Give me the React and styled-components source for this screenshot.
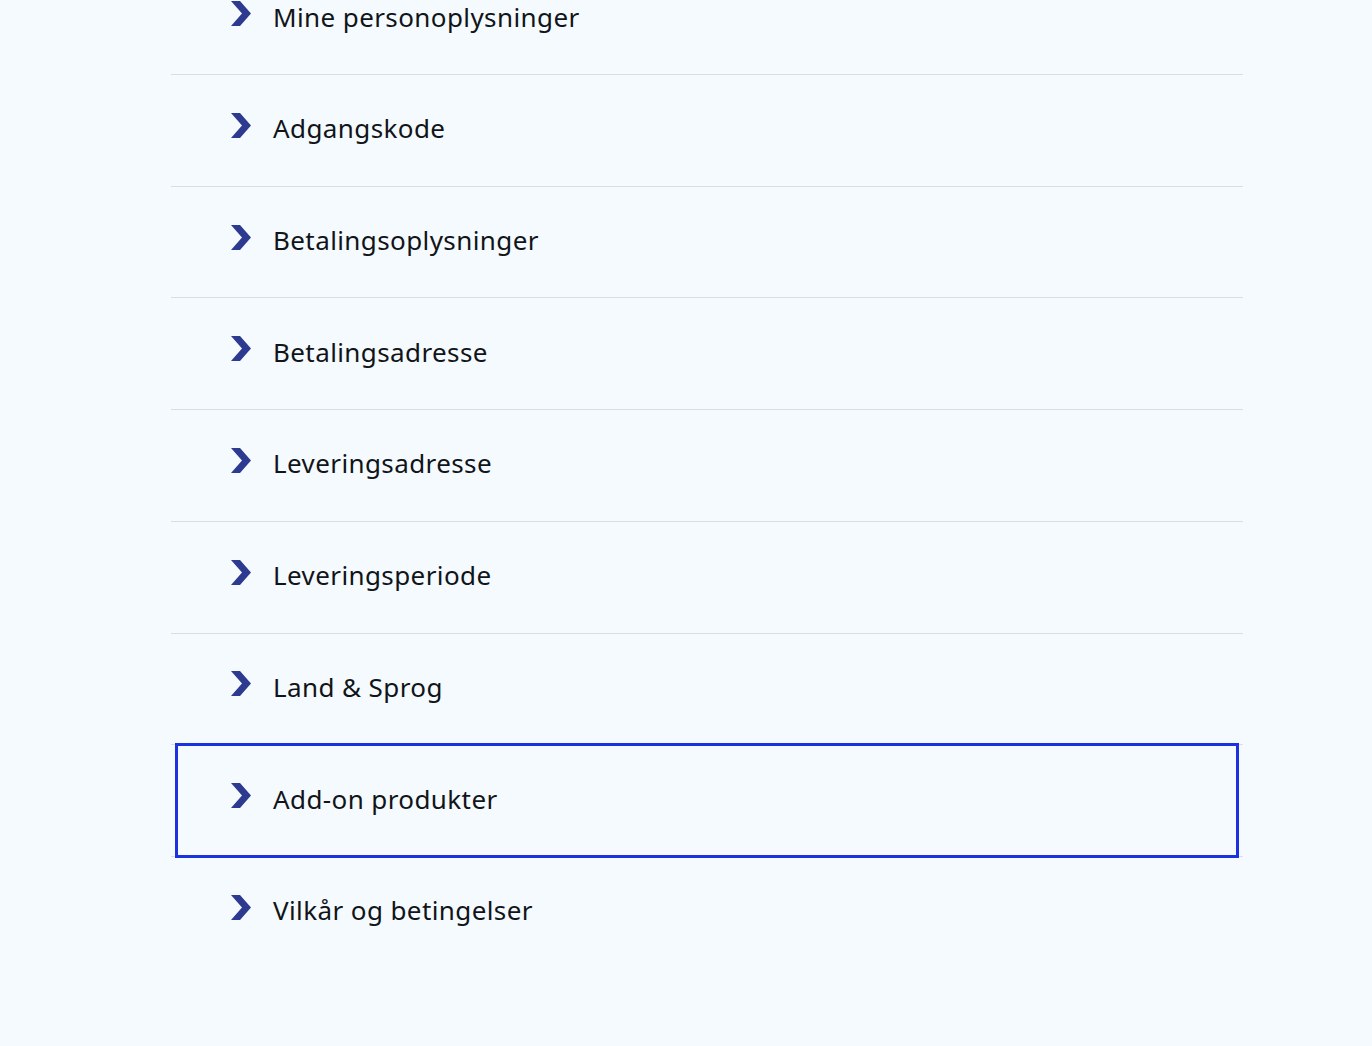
import React from 'react'
import styled, { createGlobalStyle } from 'styled-components'

const GlobalStyle = createGlobalStyle`
    html, body {
        margin: 0;
        padding: 0;
        background: #f5faff;
        overflow: hidden;
    }
`
const Page = styled.div`
    width: 100%;
    height: 1046px;
    background: #f5faff;
    font-family: 'Noto Sans', 'Lato', sans-serif;
`
const List = styled.ul`
    list-style: none;
    margin: -36.7px 0 0 171px;
    padding: 0;
    width: 1072px;
`
const Row = styled.li`
    height: 110.71px;
    border-bottom: 1px solid #dadde1;
    display: flex;
    align-items: stretch;
    &:last-child {
        border-bottom: none;
    }
`
const Item = styled.a`
    flex: 1;
    display: flex;
    align-items: center;
    gap: 22px;
    padding: 0 0 4px 53px;
    margin: 1px 7px;
    color: #111418;
    font-size: 26px;
    letter-spacing: 0.4px;
    text-decoration: none;
    outline: ${p => (p.$focused ? '3px solid #1a33de' : 'none')};
`
const Chevron = styled.svg`
    width: 20px;
    height: 25px;
    flex-shrink: 0;
    margin-bottom: 6px;
`

const items = [
    'Mine personoplysninger',
    'Adgangskode',
    'Betalingsoplysninger',
    'Betalingsadresse',
    'Leveringsadresse',
    'Leveringsperiode',
    'Land & Sprog',
    'Add-on produkter',
    'Vilkår og betingelser',
]

function App() {
    return (
        <Page>
            <GlobalStyle />
            <List>
                {items.map(label => (
                    <Row key={label}>
                        <Item href="#" $focused={label === 'Add-on produkter'}>
                            <Chevron viewBox="0 0 20 25">
                                <polygon points="0,0 9,0 20,12.5 9,25 0,25 11,12.5" fill="#2c3a8f" />
                            </Chevron>
                            <span>{label}</span>
                        </Item>
                    </Row>
                ))}
            </List>
        </Page>
    )
}

export default App
